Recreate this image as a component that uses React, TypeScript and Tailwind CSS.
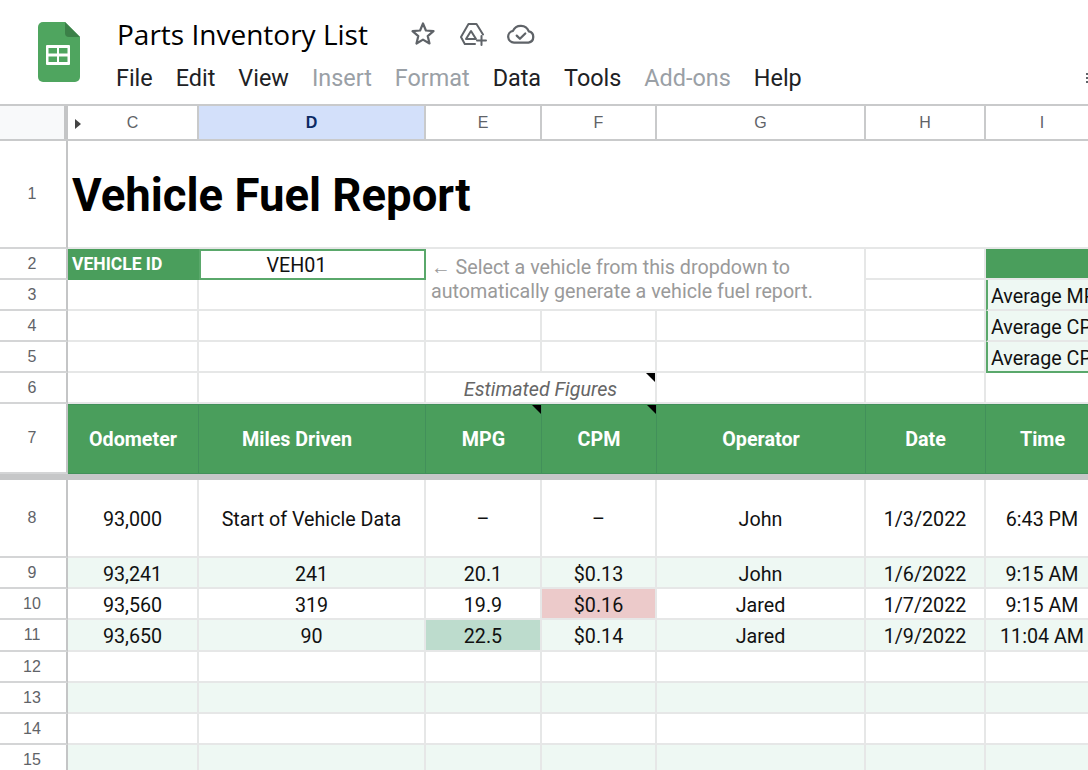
import type { ReactNode } from 'react'

const GREEN = 'bg-[#4a9e5c]'
const BAND = 'bg-[#eef8f3]'
const COLS = ['C', 'D', 'E', 'F', 'G', 'H', 'I']
const MENU = [
  { label: 'File' },
  { label: 'Edit' },
  { label: 'View' },
  { label: 'Insert', muted: true },
  { label: 'Format', muted: true },
  { label: 'Data' },
  { label: 'Tools' },
  { label: 'Add-ons', muted: true },
  { label: 'Help' },
]

const DATA = [
  { id: 9, band: true, cells: ['93,241', '241', '20.1', '$0.13', 'John', '1/6/2022', '9:15 AM'] },
  { id: 10, band: false, cells: ['93,560', '319', '19.9', '$0.16', 'Jared', '1/7/2022', '9:15 AM'] },
  { id: 11, band: true, cells: ['93,650', '90', '22.5', '$0.14', 'Jared', '1/9/2022', '11:04 AM'] },
]

function RowHead({ n }: { n: number }) {
  return (
    <div className="flex items-center justify-center border-r-2 border-b-2 border-r-[#c4c5c6] border-b-[#d4d5d6] bg-white pr-[2px] font-['Liberation_Sans',sans-serif] text-[16px] text-[#5f6368]">
      {n}
    </div>
  )
}

function Cell({ children, className = '' }: { children?: ReactNode; className?: string }) {
  return (
    <div className={`flex items-center justify-center overflow-hidden whitespace-nowrap border-r-2 border-b-2 border-[#e6e7e7] pt-[4px] text-[19.7px] text-[#111] ${className}`}>
      {children}
    </div>
  )
}

function Corner() {
  return <span className="absolute top-0 right-0 h-0 w-0 border-t-[9px] border-l-[9px] border-t-black border-l-transparent" />
}

function Head({ label, note, className = '' }: { label: string; note?: boolean; className?: string }) {
  return (
    <div className={`relative flex items-center justify-center border-t border-r border-b border-[#42905a] ${GREEN} pt-[2px] text-[19.7px] font-bold text-white ${className}`}>
      {label}
      {note && <Corner />}
    </div>
  )
}

function AvgCell({ label, last }: { label: string; last?: boolean }) {
  return (
    <div className={`flex items-center overflow-hidden whitespace-nowrap border-l-2 border-b-2 border-l-[#5aa86b] ${last ? 'border-b-[#5aa86b]' : 'border-b-[#e6e7e7]'} ${BAND} pt-[4px] pl-[3px] text-[19.7px] text-[#111]`}>
      {label}
    </div>
  )
}

function SheetsLogo() {
  return (
    <svg width="42" height="60" viewBox="0 0 42 60" className="shrink-0">
      <path d="M5 0H27L42 15V55a5 5 0 0 1-5 5H5a5 5 0 0 1-5-5V5a5 5 0 0 1 5-5Z" fill="#4fa55f" />
      <path d="M27 0L42 15H31a4 4 0 0 1-4-4Z" fill="#3b8048" />
      <rect x="8" y="23" width="24" height="20" rx="1" fill="#fff" />
      <rect x="10.5" y="26" width="8.5" height="5.5" fill="#4fa55f" />
      <rect x="21" y="26" width="8.5" height="5.5" fill="#4fa55f" />
      <rect x="10.5" y="34.5" width="8.5" height="5.5" fill="#4fa55f" />
      <rect x="21" y="34.5" width="8.5" height="5.5" fill="#4fa55f" />
    </svg>
  )
}

function StarIcon() {
  return (
    <svg width="26" height="26" viewBox="0 0 26 26" fill="none" stroke="#5f6368" strokeWidth="2.2" strokeLinejoin="round">
      <path d="M13 2.5l2.9 7 7.6.6-5.8 5 1.8 7.4L13 18.6 6.5 22.5l1.8-7.4-5.8-5 7.6-.6Z" />
    </svg>
  )
}

function DriveAddIcon() {
  return (
    <svg width="27" height="23" viewBox="0 0 27 23" fill="none" stroke="#5f6368" strokeWidth="2" strokeLinejoin="round" strokeLinecap="round">
      <path d="M23 11.5L16.5 1H8.5L1 14l3.8 7H15" />
      <path d="M11 8l-5 8h10Z" />
      <path d="M21.5 13v9M17 17.5h9" />
    </svg>
  )
}

function CloudIcon() {
  return (
    <svg width="30" height="26" viewBox="0 0 28 24" fill="none" stroke="#5f6368" strokeWidth="2.1" strokeLinejoin="round" strokeLinecap="round">
      <path d="M7.5 20a5.5 5.5 0 0 1-1-10.9A8 8 0 0 1 21.3 9.6 5.3 5.3 0 0 1 21 20Z" />
      <path d="M10 13.5l3 3 5-5" />
    </svg>
  )
}

function AppBar() {
  return (
    <div className="flex h-[104px] overflow-hidden bg-white pt-[22px] pl-[38px] font-['Roboto',sans-serif]">
      <SheetsLogo />
      <div className="ml-[35px] flex flex-1 flex-col">
        <div className="flex h-[24px] items-center pl-[2px]">
          <span className="font-['Open_Sans',sans-serif] text-[28px] leading-none text-black">Parts Inventory List</span>
          <div className="ml-[42px] flex items-center">
            <StarIcon />
            <div className="ml-[24px]">
              <DriveAddIcon />
            </div>
            <div className="ml-[19px]">
              <CloudIcon />
            </div>
          </div>
        </div>
        <div className="mt-[19px] flex items-center gap-[23px] pl-[1px] text-[23.4px] leading-[26px] text-[#202124]">
          {MENU.map(m => (
            <span key={m.label} className={m.muted ? 'text-[#9aa0a6]' : ''}>
              {m.label}
            </span>
          ))}
          <div className="ml-auto mr-[-2px] grid grid-cols-1 gap-[2px]">
            <span className="block h-[2px] w-[4px] bg-[#5f6368]" />
            <span className="block h-[2px] w-[4px] bg-[#5f6368]" />
            <span className="block h-[2px] w-[4px] bg-[#5f6368]" />
          </div>
        </div>
      </div>
    </div>
  )
}

function ColumnHeader() {
  return (
    <div className="grid h-[37px] grid-cols-[68px_131px_227px_116px_115px_209px_120px_114px] border-t-2 border-b-2 border-[#c9cacb] font-['Liberation_Sans',sans-serif] text-[16px] text-[#5f6368]">
      <div className="border-r-[4px] border-[#c4c5c6] bg-[#f8f9fa]" />
      {COLS.map(c => (
        <div
          key={c}
          className={`relative flex items-center justify-center border-r-2 border-[#c9cacb] ${c === 'D' ? 'bg-[#d3e0fa] font-bold text-[#0b2a63]' : 'bg-white'}`}
        >
          {c === 'C' && <span className="absolute left-[7px] top-[13px] h-0 w-0 border-y-[5px] border-l-[6px] border-y-transparent border-l-[#444]" />}
          {c}
        </div>
      ))}
    </div>
  )
}

export default function App() {
  return (
    <div className="h-[770px] w-[1088px] overflow-hidden bg-white font-['Roboto',sans-serif]">
      <AppBar />
      <ColumnHeader />

      <div className="grid grid-cols-[68px_131px_227px_116px_115px_209px_120px_114px] grid-rows-[108px_31px_31px_31px_31px_31px_70px_6px_78px_31px_31px_32px_31px_31px_31px_31px]">
        {/* Row 1 */}
        <RowHead n={1} />
        <div className="col-span-7 flex items-center overflow-hidden whitespace-nowrap border-b-2 border-[#e6e7e7] pt-[4px] pl-[4px] text-[45.5px] font-bold text-black">
          Vehicle Fuel Report
        </div>

        {/* Rows 2 and 3 */}
        <RowHead n={2} />
        <div className={`flex items-center ${GREEN} pl-[4px] text-[17.5px] font-bold text-white`}>VEHICLE ID</div>
        <div className="flex items-center justify-center border-2 border-[#5aa86b] pt-[2px] pr-[32px] text-[19.7px] text-[#111]">VEH01</div>
        <div className="col-span-3 row-span-2 flex flex-col justify-center border-r-2 border-b-2 border-[#e6e7e7] pt-[2px] pl-[5px] text-[19.7px] leading-[24px] text-[#9a9a9a]">
          <span className="whitespace-nowrap">← Select a vehicle from this dropdown to</span>
          <span className="whitespace-nowrap">automatically generate a vehicle fuel report.</span>
        </div>
        <Cell />
        <div className={`${GREEN} border-b-2 border-[#e6e7e7]`} />

        <RowHead n={3} />
        <Cell />
        <Cell />
        <Cell />
        <AvgCell label="Average MPG" />

        {/* Rows 4 and 5 */}
        {[4, 5].map(n => (
          <div key={n} className="contents">
            <RowHead n={n} />
            <Cell />
            <Cell />
            <Cell />
            <Cell />
            <Cell />
            <Cell />
            <AvgCell label={n === 4 ? 'Average CPM' : 'Average CPG'} last={n === 5} />
          </div>
        ))}

        {/* Row 6 */}
        <RowHead n={6} />
        <Cell />
        <Cell />
        <div className="relative col-span-2 flex items-center justify-center border-r-2 border-b-2 border-[#e6e7e7] pt-[4px] text-[19.7px] italic text-[#666]">
          Estimated Figures
          <Corner />
        </div>
        <Cell />
        <Cell />
        <div className="border-b-2 border-[#e6e7e7]" />

        {/* Row 7 */}
        <RowHead n={7} />
        <Head label="Odometer" />
        <Head label="Miles Driven" className="pr-[30px]" />
        <Head label="MPG" note />
        <Head label="CPM" note />
        <Head label="Operator" />
        <Head label="Date" />
        <Head label="Time" />

        {/* Freeze bar */}
        <div className="col-span-full bg-[#c6c7c8]" />

        {/* Row 8 */}
        <RowHead n={8} />
        <Cell>93,000</Cell>
        <Cell>Start of Vehicle Data</Cell>
        <Cell>–</Cell>
        <Cell>–</Cell>
        <Cell>John</Cell>
        <Cell>1/3/2022</Cell>
        <Cell>6:43 PM</Cell>

        {/* Rows 9 to 11 */}
        {DATA.map(row => (
          <div key={row.id} className="contents">
            <RowHead n={row.id} />
            {row.cells.map((value, i) => {
              let tone = row.band ? BAND : ''
              if (value === '$0.16') tone = 'bg-[#eccaca]'
              if (value === '22.5') tone = 'bg-[#bddccd]'
              return (
                <Cell key={i} className={tone}>
                  {value}
                </Cell>
              )
            })}
          </div>
        ))}

        {/* Rows 12 to 15 */}
        {[12, 13, 14, 15].map(n => (
          <div key={n} className="contents">
            <RowHead n={n} />
            {[0, 1, 2, 3, 4, 5, 6].map(i => (
              <Cell key={i} className={n % 2 === 1 ? BAND : ''} />
            ))}
          </div>
        ))}
      </div>
    </div>
  )
}
